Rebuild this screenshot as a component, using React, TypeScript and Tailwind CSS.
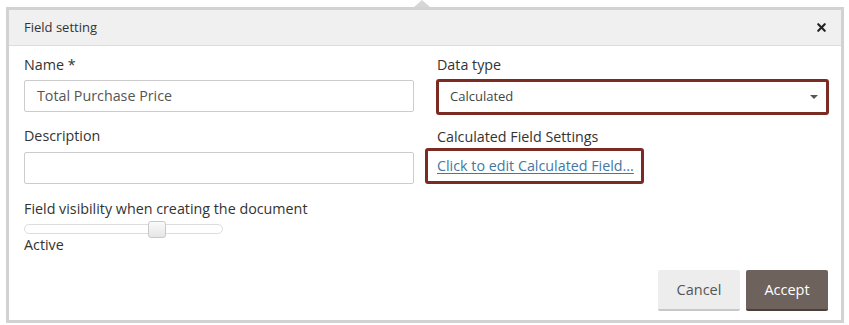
import { X } from "lucide-react"

const font = { fontFamily: '"Open Sans", "Noto Sans", sans-serif' }

function Label({ children }: { children: React.ReactNode }) {
  return <div className="text-[14.3px] leading-[20px] text-[#333]">{children}</div>
}

export default function App() {
  return (
    <div className="relative w-[849px] h-[325px] bg-white pl-[6px] pt-[7px]" style={font}>
      {/* notch */}
      <div className="absolute left-[414px] top-0 w-0 h-0 border-l-[8px] border-r-[8px] border-b-[7px] border-l-transparent border-r-transparent border-b-[#d6d6d6]" />

      <div className="w-[838px] h-[316px] border-[3px] border-[#d2d2d2] flex flex-col">
        {/* header */}
        <div className="h-[36px] bg-[#f0f0f0] border-b border-[#dcdcdc] flex items-center justify-between pl-[15px] pr-[13px]">
          <span className="text-[13px] text-[#333]">Field setting</span>
          <X className="w-[13px] h-[13px] text-[#222]" strokeWidth={4} />
        </div>

        {/* body */}
        <div className="flex-1 flex flex-col pl-[15px] pr-[12px] pt-[9px] pb-[9px]">
          <div className="flex gap-[23px]">
            {/* left column */}
            <div className="w-[390px] shrink-0 flex flex-col">
              <Label>Name *</Label>
              <div className="mt-[5px] h-[32px] border border-[#ccc] rounded-[2px] flex items-center pl-[12px] text-[14.3px] text-[#555]">
                Total Purchase Price
              </div>
              <div className="mt-[14px]">
                <Label>Description</Label>
              </div>
              <div className="mt-[6px] h-[32px] border border-[#ccc] rounded-[2px]" />
              <div className="mt-[15px]">
                <Label>Field visibility when creating the document</Label>
              </div>
              <div className="relative mt-[5px] w-[199px] h-[10px] border border-[#ddd] rounded-full bg-white">
                <div className="absolute left-[123px] -top-[4px] w-[18px] h-[17px] rounded-[3px] border border-[#c8c8c8] bg-gradient-to-b from-[#fafafa] to-[#e6e6e6]" />
              </div>
              <div className="mt-[1px]">
                <Label>Active</Label>
              </div>
            </div>

            {/* right column */}
            <div className="w-[392px] flex flex-col">
              <Label>Data type</Label>
              <div className="-ml-[1px] mt-[4px] w-[393px] h-[36px] border-[3px] border-[#7c2b22] rounded-[3px] flex items-center justify-between pl-[11px] pr-[8px]">
                <span className="text-[13px] text-[#444]">Calculated</span>
                <span className="w-0 h-0 border-l-[4px] border-r-[4px] border-t-[4px] border-l-transparent border-r-transparent border-t-[#555]" />
              </div>
              <div className="mt-[12px]">
                <Label>Calculated Field Settings</Label>
              </div>
              <div className="-ml-[12px] mt-[1px] w-[219px] h-[36px] border-[3px] border-[#7c2b22] rounded-[3px] flex items-center pl-[9px]">
                <a className="text-[14.3px] text-[#4279a3] underline underline-offset-2 cursor-pointer">
                  Click to edit Calculated Field...
                </a>
              </div>
            </div>
          </div>

          {/* footer */}
          <div className="mt-auto flex justify-end gap-[6px] pr-[1px]">
            <button className="w-[82px] h-[41px] rounded-[2px] bg-[#ededed] border-b-[2px] border-[#c8c8c8] text-[14.5px] text-[#555]">
              Cancel
            </button>
            <button className="w-[82px] h-[41px] rounded-[2px] bg-[#6e625d] border-b-[2px] border-[#4a3f3b] text-[14.5px] text-white">
              Accept
            </button>
          </div>
        </div>
      </div>
    </div>
  )
}
